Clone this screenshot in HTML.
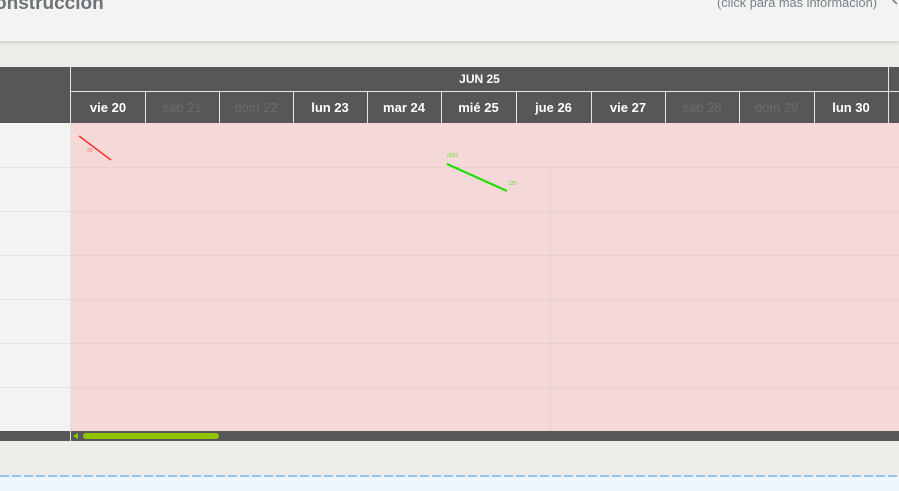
<!DOCTYPE html>
<html><head><meta charset="utf-8"><style>
*{margin:0;padding:0;box-sizing:border-box}
body{width:899px;height:491px;overflow:hidden;background:#ecece8;font-family:"Liberation Sans",sans-serif;position:relative}
.top{position:absolute;left:0;top:0;width:899px;height:41px;background:#f3f3f1;box-shadow:0 2px 3px rgba(0,0,0,.12)}
.title{position:absolute;left:-5px;top:-7px;font-size:19px;font-weight:bold;color:#6f7478}
.info{position:absolute;left:717px;top:-5px;font-size:12.8px;color:#77808a}
.hdr{position:absolute;left:0;top:67px;width:899px;height:56px;background:#575757}
.month{position:absolute;left:71px;top:67px;width:817px;height:24px;color:#fff;font-size:12px;font-weight:bold;text-align:center;line-height:24px}
.vl{position:absolute;background:#e8e8e8;width:1px}
.day{position:absolute;top:92px;height:31px;line-height:31px;text-align:center;font-size:13px;font-weight:bold;color:#fff}
.day.w{color:#6b6b6b;font-weight:normal}
.left{position:absolute;left:0;top:123px;width:70px;height:308px;background:#f3f3f1}
.grid{position:absolute;left:71px;top:123px;width:828px;height:308px;background:#f5d9d9}
.hl{position:absolute;height:1px;background:#e6d0d0}
.hl2{position:absolute;height:1px;background:#e3e3e1}
.sb{position:absolute;left:0;top:431px;width:899px;height:10px;background:#575757}
.thumb{position:absolute;left:83px;top:433px;width:136px;height:6px;border-radius:3px;background:#8fc400}
.dash{position:absolute;left:0;top:475px;width:899px;height:2px;background:repeating-linear-gradient(90deg,#94c3f5 0 9px,transparent 9px 12px)}
.bot{position:absolute;left:0;top:477px;width:899px;height:14px;background:#eef5fd}
</style></head><body>
<div class="top"><div class="title">onstrucción</div><div class="info">(click para más información)</div>
<svg style="position:absolute;left:889px;top:-4px" width="12" height="12"><path d="M2 2 L8 8" stroke="#777" stroke-width="1.5" fill="none"/></svg></div>
<div class="hdr"></div>
<div class="month">JUN 25</div>
<div class="vl" style="left:70px;top:67px;height:56px"></div>
<div class="vl" style="left:888px;top:67px;height:56px"></div>
<div style="position:absolute;left:71px;top:91px;width:828px;height:1px;background:#e8e8e8"></div>
<div class="day" style="left:71px;width:74px">vie 20</div>
<div class="day w" style="left:145px;width:74px">sáb 21</div>
<div class="day w" style="left:219px;width:74px">dom 22</div>
<div class="day" style="left:293px;width:74px">lun 23</div>
<div class="day" style="left:367px;width:74px">mar 24</div>
<div class="day" style="left:441px;width:75px">mié 25</div>
<div class="day" style="left:516px;width:75px">jue 26</div>
<div class="day" style="left:591px;width:74px">vie 27</div>
<div class="day w" style="left:665px;width:74px">sáb 28</div>
<div class="day w" style="left:739px;width:75px">dom 29</div>
<div class="day" style="left:814px;width:74px">lun 30</div>
<div class="vl" style="left:145px;top:92px;height:31px"></div>
<div class="vl" style="left:219px;top:92px;height:31px"></div>
<div class="vl" style="left:293px;top:92px;height:31px"></div>
<div class="vl" style="left:367px;top:92px;height:31px"></div>
<div class="vl" style="left:441px;top:92px;height:31px"></div>
<div class="vl" style="left:516px;top:92px;height:31px"></div>
<div class="vl" style="left:591px;top:92px;height:31px"></div>
<div class="vl" style="left:665px;top:92px;height:31px"></div>
<div class="vl" style="left:739px;top:92px;height:31px"></div>
<div class="vl" style="left:814px;top:92px;height:31px"></div>
<div class="left"></div>
<div class="grid"></div>
<div style="position:absolute;left:70px;top:123px;width:1px;height:318px;background:#e3e3e1"></div>
<div class="hl2" style="left:0;width:70px;top:167px"></div>
<div class="hl2" style="left:0;width:70px;top:211px"></div>
<div class="hl2" style="left:0;width:70px;top:255px"></div>
<div class="hl2" style="left:0;width:70px;top:299px"></div>
<div class="hl2" style="left:0;width:70px;top:343px"></div>
<div class="hl2" style="left:0;width:70px;top:387px"></div>
<div class="hl" style="left:71px;width:828px;top:167px"></div>
<div class="hl" style="left:71px;width:828px;top:211px"></div>
<div class="hl" style="left:71px;width:828px;top:255px"></div>
<div class="hl" style="left:71px;width:828px;top:299px"></div>
<div class="hl" style="left:71px;width:828px;top:343px"></div>
<div class="hl" style="left:71px;width:828px;top:387px"></div>
<div style="position:absolute;left:550px;top:167px;width:1px;height:264px;background:#e6d0d0"></div>
<svg style="position:absolute;left:0;top:0" width="899" height="491">
<line x1="79" y1="136" x2="111" y2="160" stroke="#ff3030" stroke-width="1.5"/>
<text x="87" y="152" font-size="5" fill="#f06060" font-family="Liberation Sans">20</text>
<line x1="447" y1="164" x2="507" y2="191" stroke="#22dd00" stroke-width="2.2"/>
<text x="447" y="157" font-size="5" fill="#66dd33" font-family="Liberation Sans">0833</text>
<text x="508" y="185" font-size="5" fill="#66dd33" font-family="Liberation Sans">125</text>
</svg>
<div class="sb"></div>
<div style="position:absolute;left:70px;top:431px;width:1px;height:10px;background:#ddd"></div>
<svg style="position:absolute;left:73px;top:433px" width="6" height="6"><path d="M5 0 L0 3 L5 6Z" fill="#8fc400"/></svg>
<div class="thumb"></div>
<div class="dash"></div>
<div class="bot"></div>
</body></html>
